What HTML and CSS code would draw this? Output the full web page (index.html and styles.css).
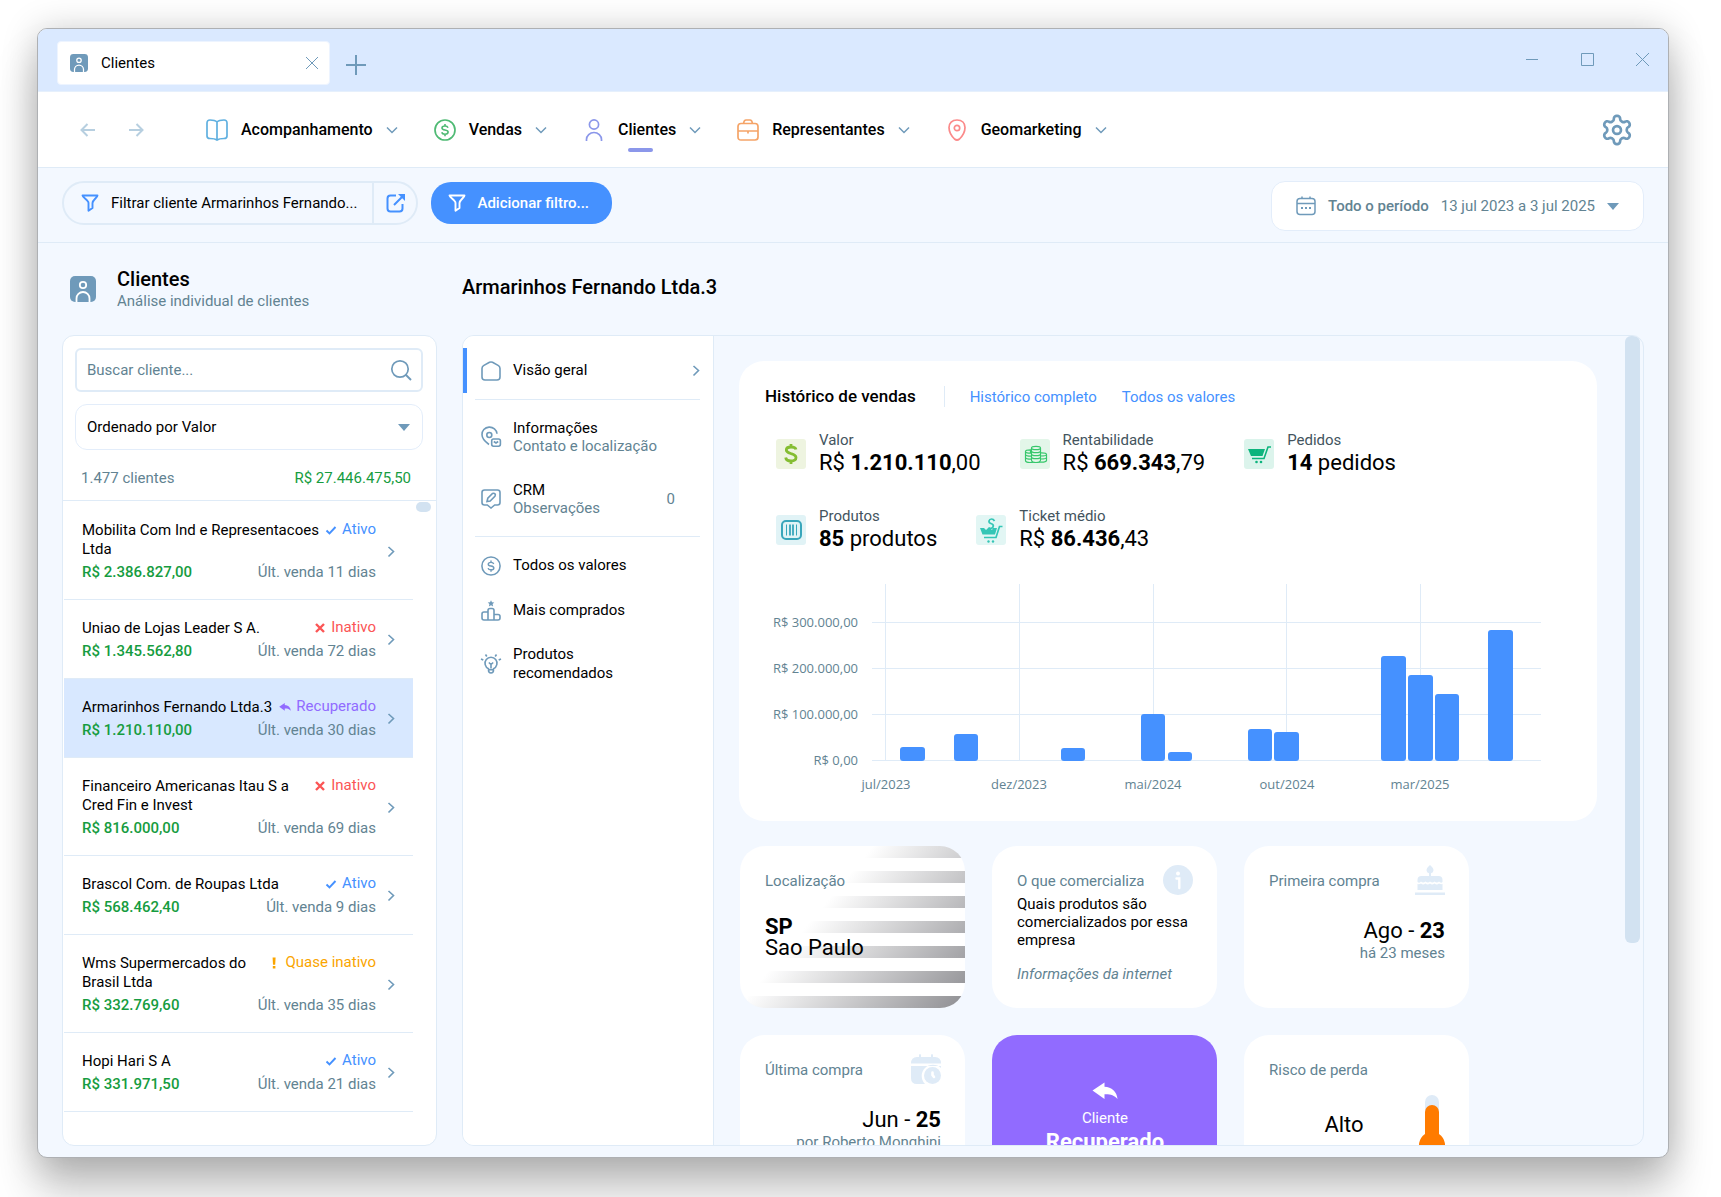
FILE: index.html
```html
<!DOCTYPE html>
<html lang="pt-BR">
<head>
  <meta charset="UTF-8">
  <meta name="viewport" content="width=device-width, initial-scale=1.0">
  <title>Clientes</title>
  <link rel="stylesheet" href="styles.css">
</head>
<body>
  <!-- Shared icons -->
  <svg class="sprite" aria-hidden="true">
    <symbol id="badge" viewBox="0 0 26 26">
      <rect width="26" height="26" rx="5" fill="#6f9aba"/>
      <circle cx="13" cy="9" r="3.2" fill="none" stroke="#fff" stroke-width="1.8"/>
      <path d="M6.5 26v-3.500a6.500 6.500 0 0 1 13 0V26" fill="none" stroke="#fff" stroke-width="1.800"/>
    </symbol>
    <symbol id="down" viewBox="0 0 12 12"><path d="M1 3.500l5 5 5-5" fill="none" stroke="currentColor" stroke-width="1.500"/></symbol>
    <symbol id="right" viewBox="0 0 8 12"><path d="M1.500 1L6.500 5.500l-5 5" fill="none" stroke="currentColor" stroke-width="1.600"/></symbol>
    <symbol id="caret" viewBox="0 0 12 7"><path d="M0 0h12L6 7z" fill="currentColor"/></symbol>
    <symbol id="funnel" viewBox="0 0 18 18"><path d="M1.500 1.500h15c0 2-5 4.500-5 7.500v5l-4 2.800V9c0-3-6-5.500-6-7.500z" fill="none" stroke="currentColor" stroke-width="1.900" stroke-linejoin="round"/></symbol>
    <symbol id="check" viewBox="0 0 12 12"><path d="M1.500 6.500l3 3 6-6.500" fill="none" stroke="currentColor" stroke-width="1.900"/></symbol>
    <symbol id="cross" viewBox="0 0 12 12"><path d="M2 2l8 8M10 2l-8 8" fill="none" stroke="currentColor" stroke-width="2.400"/></symbol>
    <symbol id="reply" viewBox="0 0 26 18"><path d="M.5 8.500L12.500.5v4.200c7 .3 12.500 4.800 13 12.300-3.500-4-7-5-13-4.800V17z" fill="currentColor"/></symbol>
    <symbol id="bang" viewBox="0 0 12 12"><path d="M4.600 0.500h3l-.4 7.200H5zM4.800 9h2.600v2.500H4.800z" fill="currentColor"/></symbol>
    <symbol id="dollar" viewBox="0 0 22 22">
      <circle cx="11" cy="11" r="10" fill="none" stroke="currentColor" stroke-width="1.700"/>
      <path d="M14 8.700C13.600 7.600 12.500 7 11 7c-1.700 0-3 .8-3 2s1 1.700 3 2 3.100.900 3.100 2.100S12.700 15.200 11 15.200c-1.600 0-2.900-.7-3.200-1.900M11 5v2M11 15.200v2" fill="none" stroke="currentColor" stroke-width="1.600"/>
    </symbol>
  </svg>

  <div class="window">
    <header class="titlebar">
      <div class="tab">
        <svg class="tab-icon"><use href="#badge"/></svg>
        <span class="tab-name">Clientes</span>
        <button class="plain" aria-label="Fechar aba">
          <svg width="14" height="14" viewBox="0 0 14 14"><path d="M1 1l12 12M13 1L1 13" stroke="currentColor" stroke-width="1"/></svg>
        </button>
      </div>
      <button class="plain tab-add" aria-label="Nova aba">
        <svg width="20" height="20" viewBox="0 0 20 20"><path d="M10 0v20M0 10h20" stroke="currentColor" stroke-width="2"/></svg>
      </button>
      <div class="window-buttons">
        <button class="plain" aria-label="Minimizar"><svg width="13" height="13" viewBox="0 0 13 13"><path d="M0 6.500h12" stroke="currentColor"/></svg></button>
        <button class="plain" aria-label="Maximizar"><svg width="13" height="13" viewBox="0 0 13 13"><path d="M.5.5h12v12H.5z" fill="none" stroke="currentColor"/></svg></button>
        <button class="plain" aria-label="Fechar"><svg width="13" height="13" viewBox="0 0 13 13"><path d="M0 0l13 13M13 0L0 13" stroke="currentColor"/></svg></button>
      </div>
    </header>

    <nav class="navbar">
      <button class="plain history" aria-label="Voltar"><svg width="18" height="18" viewBox="0 0 18 18"><path d="M16 9H3M8.500 3L2.500 9l6 6" fill="none" stroke="currentColor" stroke-width="2"/></svg></button>
      <button class="plain history" aria-label="Avançar"><svg width="18" height="18" viewBox="0 0 18 18"><path d="M2 9h13M9.500 3l6 6-6 6" fill="none" stroke="currentColor" stroke-width="2"/></svg></button>
      <div class="nav-items">
        <button class="plain nav-item">
          <svg class="nav-icon blue" viewBox="0 0 22 22"><path d="M11 3C9.500 1.500 7 1 4 1 2 1 1 2 1 4v13c0 2 1 2.500 3 2.500 3 0 5.500.4 7 1.500 1.500-1.100 4-1.500 7-1.500 2 0 3-.5 3-2.500V4c0-2-1-3-3-3-3 0-5.500.5-7 2zM11 3v18" fill="none" stroke="currentColor" stroke-width="1.700"/></svg>
          <span>Acompanhamento</span>
          <svg class="chevron-down"><use href="#down"/></svg>
        </button>
        <button class="plain nav-item">
          <svg class="nav-icon green"><use href="#dollar"/></svg>
          <span>Vendas</span>
          <svg class="chevron-down"><use href="#down"/></svg>
        </button>
        <button class="plain nav-item active">
          <svg class="nav-icon violet" viewBox="0 0 22 22"><circle cx="11" cy="5.500" r="4.600" fill="none" stroke="currentColor" stroke-width="1.700"/><path d="M3.500 22v-1.500a7.500 7 0 0 1 15 0V22" fill="none" stroke="currentColor" stroke-width="1.700"/></svg>
          <span>Clientes</span>
          <svg class="chevron-down"><use href="#down"/></svg>
        </button>
        <button class="plain nav-item">
          <svg class="nav-icon orange" viewBox="0 0 22 22"><path d="M4 4.500h14q3 0 3 3V18q0 3-3 3H4q-3 0-3-3V7.500q0-3 3-3zM1 12h20M11 12v2.500M6.500 4.500Q7 1 9 1h4q2 0 2.500 3.500" fill="none" stroke="currentColor" stroke-width="1.700"/></svg>
          <span>Representantes</span>
          <svg class="chevron-down"><use href="#down"/></svg>
        </button>
        <button class="plain nav-item">
          <svg class="nav-icon red" viewBox="0 0 22 22"><path d="M11 1c5 0 8 3 8 7.500 0 5-3.500 9.500-5.500 11.500q-2.500 2-5 0C6.500 18 3 13.500 3 8.500 3 4 6 1 11 1z" fill="none" stroke="currentColor" stroke-width="1.700"/><circle cx="11" cy="9" r="2.700" fill="none" stroke="currentColor" stroke-width="1.700"/></svg>
          <span>Geomarketing</span>
          <svg class="chevron-down"><use href="#down"/></svg>
        </button>
      </div>
      <button class="plain settings" aria-label="Configurações">
        <svg width="34" height="34" viewBox="0 0 24 24"><path d="M12.220 2h-.44a2 2 0 0 0-2 2v.18a2 2 0 0 1-1 1.730l-.43.25a2 2 0 0 1-2 0l-.15-.08a2 2 0 0 0-2.730.73l-.22.38a2 2 0 0 0 .73 2.730l.15.1a2 2 0 0 1 1 1.720v.51a2 2 0 0 1-1 1.740l-.15.09a2 2 0 0 0-.73 2.730l.22.38a2 2 0 0 0 2.730.73l.15-.08a2 2 0 0 1 2 0l.43.25a2 2 0 0 1 1 1.730V20a2 2 0 0 0 2 2h.44a2 2 0 0 0 2-2v-.18a2 2 0 0 1 1-1.730l.43-.25a2 2 0 0 1 2 0l.15.08a2 2 0 0 0 2.730-.73l.22-.39a2 2 0 0 0-.73-2.730l-.15-.08a2 2 0 0 1-1-1.740v-.5a2 2 0 0 1 1-1.740l.15-.09a2 2 0 0 0 .73-2.730l-.22-.38a2 2 0 0 0-2.730-.73l-.15.08a2 2 0 0 1-2 0l-.43-.25a2 2 0 0 1-1-1.730V4a2 2 0 0 0-2-2z" fill="none" stroke="currentColor" stroke-width="1.900"/><circle cx="12" cy="12" r="2.800" fill="none" stroke="currentColor" stroke-width="1.900"/></svg>
      </button>
    </nav>

    <div class="filters">
      <div class="filter-pill">
        <button class="plain filter-name"><svg class="funnel"><use href="#funnel"/></svg>Filtrar cliente Armarinhos Fernando...</button>
        <button class="plain filter-open" aria-label="Abrir filtro">
          <svg width="20" height="20" viewBox="0 0 20 20"><path d="M10 2.500H4.500q-3 0-3 3v10q0 3 3 3h9q3 0 3-3V11M8 12l9-9" fill="none" stroke="currentColor" stroke-width="2"/><path d="M12 1h7v7z" fill="currentColor"/></svg>
        </button>
      </div>
      <button class="filter-add"><svg class="funnel"><use href="#funnel"/></svg>Adicionar filtro...</button>
      <button class="period">
        <svg width="20" height="20" viewBox="0 0 20 20"><path d="M4 2.500h12q3 0 3 3v10q0 3-3 3H4q-3 0-3-3v-10q0-3 3-3zM1 7.500h18M6 .5v2M14 .5v2" fill="none" stroke="currentColor" stroke-width="1.500"/><path d="M5 12h2M9 12h2M13 12h2" stroke="currentColor" stroke-width="2"/></svg>
        <strong>Todo o período</strong>
        <span>13 jul 2023 a 3 jul 2025</span>
        <svg class="caret"><use href="#caret"/></svg>
      </button>
    </div>

    <main class="content">
      <section class="clients">
        <div class="page-head">
          <svg class="page-icon"><use href="#badge"/></svg>
          <div>
            <h1>Clientes</h1>
            <p>Análise individual de clientes</p>
          </div>
        </div>
        <div class="client-card">
          <div class="client-controls">
            <div class="search">
              <input type="search" placeholder="Buscar cliente..." aria-label="Buscar cliente">
              <svg width="22" height="22" viewBox="0 0 22 22"><circle cx="10" cy="10" r="8.200" fill="none" stroke="currentColor" stroke-width="1.700"/><path d="M15.500 15.500l5.500 5.500" stroke="currentColor" stroke-width="1.900"/></svg>
            </div>
            <div class="sort">
              <select aria-label="Ordenação"><option>Ordenado por Valor</option></select>
              <svg class="caret"><use href="#caret"/></svg>
            </div>
          </div>
          <div class="client-total"><span>1.477 clientes</span><span class="money">R$ 27.446.475,50</span></div>
          <div class="client-scroll">
            <div class="client-list">
              <a class="client" href="#">
                <div class="client-info">
                  <div class="client-row"><span class="client-name">Mobilita Com Ind e Representacoes Ltda</span><span class="status ativo"><svg><use href="#check"/></svg>Ativo</span></div>
                  <div class="client-row last"><strong class="money">R$ 2.386.827,00</strong><span>Últ. venda 11 dias</span></div>
                </div>
                <svg class="chevron"><use href="#right"/></svg>
              </a>
              <a class="client" href="#">
                <div class="client-info">
                  <div class="client-row"><span class="client-name">Uniao de Lojas Leader S A.</span><span class="status inativo"><svg><use href="#cross"/></svg>Inativo</span></div>
                  <div class="client-row last"><strong class="money">R$ 1.345.562,80</strong><span>Últ. venda 72 dias</span></div>
                </div>
                <svg class="chevron"><use href="#right"/></svg>
              </a>
              <a class="client selected" href="#">
                <div class="client-info">
                  <div class="client-row"><span class="client-name">Armarinhos Fernando Ltda.3</span><span class="status recuperado"><svg><use href="#reply"/></svg>Recuperado</span></div>
                  <div class="client-row last"><strong class="money">R$ 1.210.110,00</strong><span>Últ. venda 30 dias</span></div>
                </div>
                <svg class="chevron"><use href="#right"/></svg>
              </a>
              <a class="client" href="#">
                <div class="client-info">
                  <div class="client-row"><span class="client-name">Financeiro Americanas Itau S a Cred Fin e Invest</span><span class="status inativo"><svg><use href="#cross"/></svg>Inativo</span></div>
                  <div class="client-row last"><strong class="money">R$ 816.000,00</strong><span>Últ. venda 69 dias</span></div>
                </div>
                <svg class="chevron"><use href="#right"/></svg>
              </a>
              <a class="client" href="#">
                <div class="client-info">
                  <div class="client-row"><span class="client-name">Brascol Com. de Roupas Ltda</span><span class="status ativo"><svg><use href="#check"/></svg>Ativo</span></div>
                  <div class="client-row last"><strong class="money">R$ 568.462,40</strong><span>Últ. venda 9 dias</span></div>
                </div>
                <svg class="chevron"><use href="#right"/></svg>
              </a>
              <a class="client" href="#">
                <div class="client-info">
                  <div class="client-row"><span class="client-name">Wms Supermercados do Brasil Ltda</span><span class="status quase"><svg><use href="#bang"/></svg>Quase inativo</span></div>
                  <div class="client-row last"><strong class="money">R$ 332.769,60</strong><span>Últ. venda 35 dias</span></div>
                </div>
                <svg class="chevron"><use href="#right"/></svg>
              </a>
              <a class="client" href="#">
                <div class="client-info">
                  <div class="client-row"><span class="client-name">Hopi Hari S A</span><span class="status ativo"><svg><use href="#check"/></svg>Ativo</span></div>
                  <div class="client-row last"><strong class="money">R$ 331.971,50</strong><span>Últ. venda 21 dias</span></div>
                </div>
                <svg class="chevron"><use href="#right"/></svg>
              </a>
            </div>
            <div class="list-thumb"></div>
          </div>
        </div>
      </section>

      <section class="detail">
        <h2 class="detail-title">Armarinhos Fernando Ltda.3</h2>
        <div class="panel">
          <nav class="menu">
            <a class="menu-item current" href="#">
              <svg class="menu-icon" viewBox="0 0 20 20"><path d="M8.500 1.300L2.500 4.600Q1 5.500 1 7.500V16q0 3 3 3h12q3 0 3-3V7.500q0-2-1.500-2.900l-6-3.300q-1.500-.7-3 0z"/></svg>
              <span>Visão geral</span>
              <svg class="chevron"><use href="#right"/></svg>
            </a>
            <hr>
            <a class="menu-item tall" href="#">
              <svg class="menu-icon" viewBox="0 0 20 20"><path d="M8 17.500C4.500 15 1 11.500 1 7.800a7.500 7.200 0 0 1 15-1M5.800 8a2.500 2.500 0 1 0 5 0 2.500 2.500 0 1 0-5 0M12.500 12h5q1.900 0 1.900 1.700v3.600q0 1.900-1.900 1.900h-5q-1.800 0-1.800-1.900v-3.600q0-1.700 1.800-1.700zM12.800 14.500l2.200 1.500 2.200-1.500"/></svg>
              <span>Informações<small>Contato e localização</small></span>
            </a>
            <a class="menu-item tall" href="#">
              <svg class="menu-icon" viewBox="0 0 20 20"><path d="M3.500 1h13Q19 1 19 3.500v10q0 2.500-2.500 2.500h-2.800L10 19l-3.700-3H3.500Q1 16 1 13.500v-10Q1 1 3.500 1zM6 12.500l.8-3.300 4.700-4.700q1.500-.6 2.500.3.800 1-.1 2.500L9.200 12z"/></svg>
              <span>CRM<small>Observações</small></span>
              <span class="count">0</span>
            </a>
            <hr>
            <a class="menu-item" href="#">
              <svg class="menu-icon solid"><use href="#dollar"/></svg>
              <span>Todos os valores</span>
            </a>
            <a class="menu-item" href="#">
              <svg class="menu-icon" viewBox="0 0 20 20"><path d="M7 19V9.500q0-2 2-2h2q2 0 2 2V19M7 11H3q-2 0-2 2v4q0 2 2 2h14q2 0 2-2v-1.500q0-2-2-2h-4"/><path class="filled" d="M10-.8l1 2.100 2.300.3-1.700 1.500.5 2.400L10 4.300 7.900 5.500l.5-2.400L6.700 1.600 9 1.300z"/></svg>
              <span>Mais comprados</span>
            </a>
            <a class="menu-item tall" href="#">
              <svg class="menu-icon" viewBox="0 0 20 20"><path d="M7.500 16v-1.300a6 6 0 1 1 5 0V16q0 3-2.500 3t-2.500-3zM7.500 15.800h5M10 14.500v-4M7.800 8.500l2.200 2 2.200-2M0 5l2.300 1M20 5l-2.300 1M4.500.5l1.300 2M15.500.5l-1.300 2"/></svg>
              <span>Produtos recomendados</span>
            </a>
          </nav>

          <div class="overview">
            <article class="sales">
              <div class="sales-head">
                <h3>Histórico de vendas</h3>
                <a href="#">Histórico completo</a>
                <a href="#">Todos os valores</a>
              </div>
              <div class="kpis">
                <div class="kpi">
                  <svg class="kpi-icon" viewBox="0 0 30 30"><rect width="30" height="30" rx="3" fill="#eef4e0"/><path d="M20 10.500C19.500 8.600 17.800 8 15 8c-3 0-4.700 1-4.700 3 0 2.300 2 2.800 4.700 3.600 3 .8 5 1.500 5 4 0 2.200-2 3.400-5 3.400-3 0-5-1-5.300-3.500M15 5v3M15 22v3" fill="none" stroke="#84bd31" stroke-width="2.800"/></svg>
                  <div><span>Valor</span><p>R$ <b>1.210.110</b>,00</p></div>
                </div>
                <div class="kpi">
                  <svg class="kpi-icon" viewBox="0 0 30 30"><rect width="30" height="30" rx="3" fill="#e3f6e9"/><g fill="#e3f6e9" stroke="#36c76b" stroke-width="1.200"><path d="M5.500 12.500v9q0 2 4.500 2t5-2v-9M17 15.500v6q0 1.700 4.500 1.700t5-1.700v-6q0-1.700-5-1.700-4.500 0-4.500 1.700zM5.500 12.500q0 1.700 5 1.700v-3.400q-5 0-5 1.700z"/><path d="M11.500 9v12q0 2.500 4.500 2.500t4.500-2.500V9q0-1.700-4.500-1.700T11.500 9z"/><path d="M11.500 9q0 1.700 4.500 1.700T20.500 9M11.500 12q0 1.700 4.500 1.700t4.500-1.700M11.500 15q0 1.700 4.500 1.700t4.500-1.700M11.500 18q0 1.700 4.500 1.700t4.500-1.700M5.500 15.500q0 1.700 6 1.700M5.500 18.500q0 1.700 6 1.700M20.500 17q6 0 6-1.500M20.500 20q6 0 6-1.500" fill="none"/></g></svg>
                  <div><span>Rentabilidade</span><p>R$ <b>669.343</b>,79</p></div>
                </div>
                <div class="kpi">
                  <svg class="kpi-icon" viewBox="0 0 30 30"><rect width="30" height="30" rx="3" fill="#dcf4ec"/><path d="M4 10h17l-2.500 7H7z" fill="#0db47d"/><path d="M27 8h-3l-4 11.500H8" fill="none" stroke="#0db47d" stroke-width="1.600"/><circle cx="12.500" cy="23" r="1.300" fill="#0db47d"/><circle cx="17" cy="23" r="1.300" fill="#0db47d"/></svg>
                  <div><span>Pedidos</span><p><b>14</b> pedidos</p></div>
                </div>
                <div class="kpi">
                  <svg class="kpi-icon" viewBox="0 0 30 30"><rect width="30" height="30" rx="3" fill="#e1f3f6"/><rect x="6" y="6" width="19" height="18" rx="4" fill="none" stroke="#39a6bb" stroke-width="2"/><path d="M10.500 9.500v11M20.500 9.500v11" stroke="#39a6bb"/><path d="M14 9.500v11M17 9.500v11" stroke="#39a6bb" stroke-width="1.800"/></svg>
                  <div><span>Produtos</span><p><b>85</b> produtos</p></div>
                </div>
                <div class="kpi">
                  <svg class="kpi-icon" viewBox="0 0 30 30"><rect width="30" height="30" rx="3" fill="#e2f6f4"/><path d="M4 13h4l2 2 3-3 3 3 1-2h4l-2 6.500H6.500z" fill="#35c6b6"/><path d="M26.500 11.500h-3L20 22.500H8M18.500 6q-1-2-3-2T13 6t3 3q2 1 1 3t-4 1" fill="none" stroke="#35c6b6" stroke-width="1.700"/><circle cx="12.500" cy="26.500" r="1.200" fill="#35c6b6"/><circle cx="17" cy="26.500" r="1.200" fill="#35c6b6"/></svg>
                  <div><span>Ticket médio</span><p>R$ <b>86.436</b>,43</p></div>
                </div>
              </div>
              <svg class="chart" viewBox="0 0 806 222" role="img" aria-label="Vendas por mês">
                <g class="grid">
                  <path d="M107 43.500h669M107 89.500h669M107 135.500h669M107 181.500h669"/>
                  <path d="M120.500 5v177M254.500 5v177M388.500 5v177M521.500 5v177M655.500 5v177"/>
                </g>
                <g class="bars">
                  <rect x="135" y="168" width="25" height="14" rx="3"/>
                  <rect x="189" y="155" width="24" height="27" rx="3"/>
                  <rect x="296" y="169" width="24" height="13" rx="3"/>
                  <rect x="376" y="135" width="24" height="47" rx="3"/>
                  <rect x="403" y="173" width="24" height="9" rx="3"/>
                  <rect x="483" y="150" width="24" height="32" rx="3"/>
                  <rect x="509" y="153" width="25" height="29" rx="3"/>
                  <rect x="616" y="77" width="25" height="105" rx="3"/>
                  <rect x="643" y="96" width="25" height="86" rx="3"/>
                  <rect x="670" y="115" width="24" height="67" rx="3"/>
                  <rect x="723" y="51" width="25" height="131" rx="3"/>
                </g>
                <g text-anchor="end">
                  <text x="93" y="48">R$ 300.000,00</text>
                  <text x="93" y="94">R$ 200.000,00</text>
                  <text x="93" y="140">R$ 100.000,00</text>
                  <text x="93" y="186">R$ 0,00</text>
                </g>
                <g text-anchor="middle">
                  <text x="121" y="210">jul/2023</text>
                  <text x="254" y="210">dez/2023</text>
                  <text x="388" y="210">mai/2024</text>
                  <text x="522" y="210">out/2024</text>
                  <text x="655" y="210">mar/2025</text>
                </g>
              </svg>
            </article>

            <div class="tiles">
              <article class="tile place">
                <div class="tile-head"><h4>Localização</h4></div>
                <p class="city"><b>SP</b><br>Sao Paulo</p>
              </article>
              <article class="tile">
                <div class="tile-head"><h4>O que comercializa</h4>
                  <svg viewBox="0 0 30 30"><circle cx="15" cy="15" r="15"/><circle cx="15" cy="8.500" r="2" fill="#fff"/><path d="M13.500 13.500h2.800V23" fill="none" stroke="#fff" stroke-width="2.400" stroke-linecap="round"/></svg>
                </div>
                <p class="text">Quais produtos são comercializados por essa empresa</p>
                <p class="source">Informações da internet</p>
              </article>
              <article class="tile">
                <div class="tile-head"><h4>Primeira compra</h4>
                  <svg viewBox="0 0 30 30"><path d="M15 0q3.500 3 3.500 5.200 0 2.300-2.500 3V11h7.500q4 0 4 4v2q-1.500 1.500-3.500-.5-2 2-4.500 0-2 2-4.500 0-2 2-4.500 0-2.500 2-4.500 0-1.500 2-3.500.5v-2q0-4 4-4H14V8.200q-2.500-.7-2.500-3Q11.500 3 15 0zM2.500 25v-6q2 .500 3.500-.5 2 2 4.500 0 2 2 4.500 0 2 2 4.500 0 2.500 2 4.500 0 1.500 1 3.500.5v6zM0 27.500h30V30H0z"/></svg>
                </div>
                <p class="figure">Ago - <b>23</b></p>
                <p class="note">há 23 meses</p>
              </article>
              <article class="tile">
                <div class="tile-head"><h4>Última compra</h4>
                  <svg viewBox="0 0 30 30"><path d="M0 9.500Q0 3 6 3h2V1q1-2 2 0v2h10V1q1-2 2 0v2h2q6 0 6 6.500zM0 12h30v2a11 11 0 0 0-16 16H6q-6 0-6-6z"/><circle cx="21.500" cy="21.500" r="8.500"/><path d="M21.500 18.500v2.500l1.500 2" fill="none" stroke="#fff" stroke-width="2.600" stroke-linecap="round"/></svg>
                </div>
                <p class="figure">Jun - <b>25</b></p>
                <p class="note">por Roberto Monghini</p>
              </article>
              <article class="tile recovered">
                <svg><use href="#reply"/></svg>
                <p>Cliente</p>
                <b>Recuperado</b>
              </article>
              <article class="tile">
                <div class="tile-head"><h4>Risco de perda</h4></div>
                <div class="risk">
                  <span>Alto</span>
                  <svg viewBox="0 0 26 60"><rect x="6" y="0" width="14" height="40" rx="7" fill="#dfebf7"/><path d="M6 17a7 7 0 0 1 14 0v22a13 13 0 1 1-14 0z" fill="#ff7b00"/></svg>
                </div>
              </article>
            </div>
          </div>
          <div class="track"><div class="thumb"></div></div>
        </div>
      </section>
    </main>
  </div>
</body>
</html>
```
FILE: styles.css
```css
* {
  margin: 0;
  padding: 0;
  box-sizing: border-box;
}

body {
  height: 100vh;
  padding: 28px 52px 39px 37px;
  background: #fff;
  color: #000;
  font-family: Roboto, sans-serif;
  font-size: 15px;
  line-height: 20px;
  overflow: hidden;
}

button,
input,
select {
  font: inherit;
}

svg {
  display: block;
  flex: none;
}

a {
  color: inherit;
  text-decoration: none;
}

.sprite {
  position: absolute;
  width: 0;
  height: 0;
}

.plain {
  display: flex;
  align-items: center;
  background: none;
  border: none;
  color: #6f9aba;
  cursor: pointer;
}

.window {
  display: flex;
  flex-direction: column;
  height: 100%;
  background: #f3f8ff;
  border: 1px solid #aeb0b3;
  border-radius: 10px;
  box-shadow: 0 34px 44px rgba(0, 0, 0, 0.22), 0 2px 36px rgba(0, 0, 0, 0.2);
  overflow: hidden;
}

/* Title bar */

.titlebar {
  display: flex;
  align-items: flex-start;
  height: 63px;
  padding: 12px 19px 0;
  background: #dae9ff;
  border-bottom: 1px solid #e6f0fc;
}

.tab {
  display: flex;
  align-items: center;
  width: 273px;
  height: 44px;
  padding: 0 10px 0 12px;
  background: #fff;
  border: 1px solid #edf4ff;
  border-radius: 4px;
}

.tab-icon {
  width: 18px;
  height: 18px;
}

.tab-name {
  flex: 1;
  margin-left: 13px;
}

.tab-add {
  height: 48px;
  margin-left: 16px;
}

.window-buttons {
  display: flex;
  gap: 42px;
  height: 37px;
  margin-left: auto;
}

/* Main navigation */

.navbar {
  display: flex;
  align-items: center;
  height: 76px;
  padding: 0 34px 0 41px;
  background: #fff;
  border-bottom: 1px solid #dfebf7;
}

.history {
  margin-right: 30px;
  color: #b7cfe0;
}

.nav-items {
  display: flex;
  gap: 36px;
  margin-left: 31px;
}

.nav-item {
  position: relative;
  gap: 13px;
  height: 44px;
  font-size: 16px;
  font-weight: 500;
}

.nav-item span {
  color: #000;
}

.nav-item.active::after {
  content: "";
  position: absolute;
  left: 45px;
  bottom: 0;
  width: 25px;
  height: 4px;
  border-radius: 2px;
  background: #8b97ea;
}

.nav-icon {
  width: 22px;
  height: 22px;
  overflow: visible;
}

.chevron-down {
  width: 12px;
  height: 12px;
}

.blue { color: #60b0e0; }
.green { color: #4fba74; }
.violet { color: #8b97ea; }
.orange { color: #f5a468; }
.red { color: #fb8a8a; }

.settings {
  margin-left: auto;
}

/* Filter bar */

.filters {
  display: flex;
  align-items: flex-start;
  height: 75px;
  padding: 13px 24px 0;
  border-bottom: 1px solid #dfebf7;
}

.filter-pill {
  display: flex;
  height: 44px;
  border: 2px solid #dfebf7;
  border-radius: 22px;
}

.filter-name {
  gap: 12px;
  padding: 0 15px 0 17px;
  color: #000;
}

.funnel {
  width: 18px;
  height: 18px;
  color: #4591ff;
}

.filter-open {
  padding: 0 10px 0 12px;
  border-left: 2px solid #dfebf7;
  color: #4591ff;
}

.filter-add {
  display: flex;
  align-items: center;
  gap: 11px;
  height: 42px;
  margin: 1px 0 0 13px;
  padding: 0 23px 0 17px;
  background: #4591ff;
  border: none;
  border-radius: 20px;
  color: #fff;
  font-weight: 500;
}

.filter-add .funnel {
  color: #fff;
}

.period {
  display: flex;
  align-items: center;
  gap: 12px;
  height: 50px;
  margin-left: auto;
  padding: 0 24px;
  background: #fff;
  border: 1px solid #e3edfa;
  border-radius: 14px;
  color: #628392;
}

.period strong {
  font-weight: 500;
}

.period svg {
  color: #6f9aba;
}

.caret {
  width: 12px;
  height: 7px;
  color: #6f9aba;
}

/* Page */

.content {
  display: flex;
  flex: 1;
  gap: 25px;
  min-height: 0;
  padding: 0 24px 11px;
}

.clients {
  display: flex;
  flex-direction: column;
  width: 375px;
}

.page-head {
  display: flex;
  align-items: center;
  gap: 21px;
  height: 92px;
  padding-left: 8px;
}

.page-icon {
  width: 26px;
  height: 26px;
}

.page-head h1,
.detail-title {
  font-size: 20px;
  font-weight: 500;
  line-height: 24px;
}

.page-head p {
  color: #628392;
}

/* Client list */

.client-card {
  display: flex;
  flex: 1;
  flex-direction: column;
  min-height: 0;
  background: #fff;
  border: 1px solid #dfebf7;
  border-radius: 12px;
  overflow: hidden;
}

.client-controls {
  display: flex;
  flex-direction: column;
  gap: 12px;
  padding: 12px 13px 0 12px;
}

.search {
  display: flex;
  align-items: center;
  height: 44px;
  padding: 0 9px 0 10px;
  border: 2px solid #dfebf7;
  border-radius: 6px;
  color: #6f9aba;
}

.search input {
  flex: 1;
  min-width: 0;
  border: none;
  outline: none;
}

.search input::placeholder {
  color: #628392;
}

.sort {
  display: grid;
  align-items: center;
}

.sort select,
.sort .caret {
  grid-area: 1 / 1;
}

.sort select {
  height: 46px;
  padding: 0 11px;
  appearance: none;
  background: #fff;
  border: 1px solid #e3edfa;
  border-radius: 12px;
  color: #000;
}

.sort .caret {
  justify-self: end;
  margin-right: 13px;
  pointer-events: none;
}

.client-total {
  display: flex;
  justify-content: space-between;
  padding: 18px 25px 12px 18px;
  border-bottom: 1px solid #dfebf7;
  color: #628392;
}

.money {
  color: #169c40;
  font-weight: 500;
}

.client-total .money {
  font-weight: 400;
}

.client-scroll {
  display: flex;
  gap: 3px;
  padding: 1px 5px 0 1px;
}

.client-list {
  flex: 1;
}

.list-thumb {
  width: 15px;
  height: 10px;
  border-radius: 6px;
  background: #d2e2f1;
}

.client {
  display: flex;
  align-items: center;
  gap: 11px;
  padding: 19px 18px 17px;
  border-bottom: 1px solid #dfebf7;
}

.client.selected {
  background: #d8e8ff;
}

.client-info {
  flex: 1;
}

.client-row {
  display: flex;
  justify-content: space-between;
  line-height: 19px;
}

.client-row.last {
  margin-top: 3px;
  color: #628392;
  line-height: 20px;
}

.status {
  display: flex;
  flex: none;
  align-items: center;
  gap: 5px;
  height: 17px;
}

.status svg {
  width: 12px;
  height: 12px;
}

.ativo { color: #4591ff; }
.inativo { color: #fb5555; }
.recuperado { color: #916bff; }
.quase { color: #faa500; }

.chevron {
  width: 8px;
  height: 12px;
  color: #6f9aba;
}

/* Client detail */

.detail {
  display: flex;
  flex: 1;
  flex-direction: column;
  min-width: 0;
}

.detail-title {
  display: flex;
  align-items: center;
  height: 92px;
  padding-bottom: 4px;
}

.panel {
  display: flex;
  flex: 1;
  min-height: 0;
  border: 1px solid #dfebf7;
  border-radius: 12px;
  overflow: hidden;
}

.menu {
  flex: none;
  width: 251px;
  padding-top: 12px;
  background: #fff;
  border-right: 1px solid #dfebf7;
}

.menu hr {
  margin: 6px 13px 6px 12px;
  border: none;
  border-top: 1px solid #dfebf7;
}

.menu-item {
  display: flex;
  align-items: center;
  gap: 12px;
  height: 45px;
  padding: 0 13px 0 14px;
  border-left: 4px solid transparent;
  line-height: 19px;
}

.menu-item.tall {
  height: 62px;
}

.menu-item.current {
  border-color: #4591ff;
}

.menu-item span {
  max-width: 155px;
}

.menu-item .chevron,
.menu-item .count {
  margin-left: auto;
}

.menu-item .count {
  margin-right: 25px;
  color: #628392;
}

.menu-item small {
  display: block;
  color: #628392;
  font-size: 15px;
  line-height: 17px;
}

.menu-icon {
  width: 20px;
  height: 20px;
  color: #6f9aba;
  fill: none;
  stroke: #6f9aba;
  stroke-width: 1.6;
  overflow: visible;
}

.menu-icon.solid {
  stroke: none;
}

.menu-icon .filled {
  fill: #6f9aba;
  stroke: none;
}

.overview {
  flex: 1;
  min-width: 0;
  padding: 25px 28px 0 25px;
  overflow: hidden;
}

.track {
  flex: none;
  width: 18px;
}

.thumb {
  width: 15px;
  height: 75%;
  border-radius: 6px;
  background: #d2e2f1;
}

/* Sales history */

.sales {
  padding: 25px 26px 20px;
  background: #fff;
  border-radius: 25px;
}

.sales-head {
  display: flex;
  align-items: center;
  gap: 25px;
  height: 21px;
}

.sales-head h3 {
  padding-right: 28px;
  border-right: 1px solid #dfebf7;
  font-size: 17px;
  font-weight: 500;
  line-height: 21px;
}

.sales-head a {
  color: #4591ff;
}

.kpis {
  display: flex;
  flex-wrap: wrap;
  gap: 30px 39px;
  margin-top: 24px;
  padding-left: 11px;
}

.kpi {
  display: flex;
  align-items: center;
  gap: 13px;
}

.kpi-icon {
  width: 30px;
  height: 30px;
}

.kpi span {
  display: block;
  color: #43545e;
  line-height: 18px;
}

.kpi p {
  font-size: 22px;
  line-height: 28px;
}

.chart {
  width: 100%;
  margin-top: 26px;
}

.chart text {
  fill: #628392;
  font-family: "Open Sans", sans-serif;
  font-size: 13px;
}

.grid path {
  fill: none;
  stroke: #dfebf7;
}

.bars {
  fill: #4591ff;
}

/* Tiles */

.tiles {
  display: flex;
  flex-wrap: wrap;
  gap: 27px;
  margin: 25px 0 0 1px;
}

.tile {
  width: 225px;
  height: 162px;
  padding: 19px 24px 0 25px;
  background: #fff;
  border-radius: 25px;
}

.tile.place {
  background:
    repeating-linear-gradient(transparent 0 12px, #fff 12px 25px),
    linear-gradient(130deg, #fff 37%, #8e8e92);
}

.tile-head {
  display: flex;
  align-items: center;
  justify-content: space-between;
  height: 30px;
}

.tile-head h4 {
  padding-top: 2px;
  color: #628392;
  font-size: 15px;
  font-weight: 400;
}

.tile-head svg {
  width: 30px;
  height: 30px;
  fill: #dfebf7;
}

.city {
  margin-top: 21px;
  font-size: 22px;
  line-height: 21px;
}

.text {
  line-height: 18px;
}

.source {
  margin-top: 15px;
  color: #628392;
  font-style: italic;
}

.figure {
  margin-top: 24px;
  font-size: 22px;
  line-height: 24px;
  text-align: right;
}

.note {
  color: #628392;
  text-align: right;
}

.tile.recovered {
  display: flex;
  flex-direction: column;
  align-items: center;
  padding-top: 47px;
  background: #916bff;
  color: #fff;
}

.recovered svg {
  width: 26px;
  height: 18px;
}

.recovered p {
  margin-top: 8px;
}

.recovered b {
  font-size: 22px;
  line-height: 28px;
}

.risk {
  display: flex;
  align-items: center;
  margin-top: 11px;
  font-size: 22px;
  line-height: 22px;
  text-align: center;
}

.risk span {
  flex: 1;
}

.risk svg {
  width: 26px;
  height: 60px;
}
```
